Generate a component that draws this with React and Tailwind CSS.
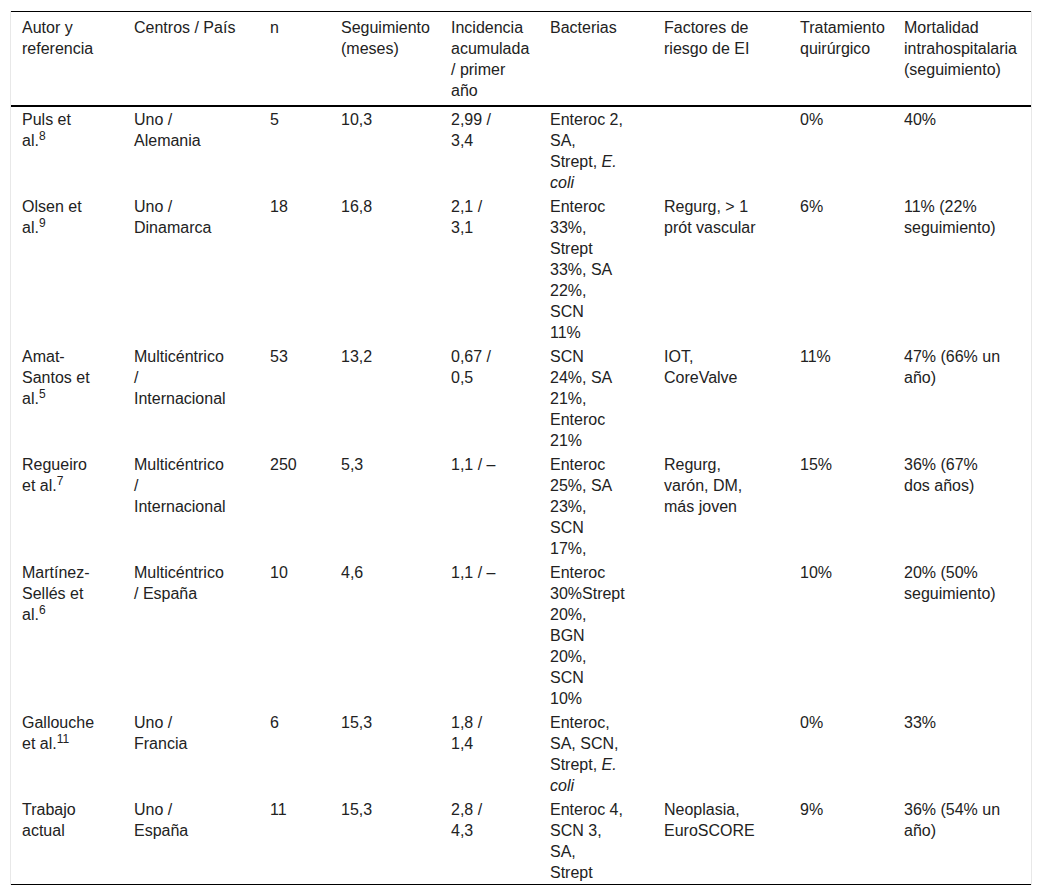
import React from "react";

const I = ({ children }) => <i>{children}</i>;

const header = [
  ["Autor y", "referencia"],
  ["Centros / País"],
  ["n"],
  ["Seguimiento", "(meses)"],
  ["Incidencia", "acumulada", "/ primer", "año"],
  ["Bacterias"],
  ["Factores de", "riesgo de EI"],
  ["Tratamiento", "quirúrgico"],
  ["Mortalidad", "intrahospitalaria", "(seguimiento)"],
];

const rows = [
  [
    ["Puls et", <>al.<sup>8</sup></>],
    ["Uno /", "Alemania"],
    ["5"],
    ["10,3"],
    ["2,99 /", "3,4"],
    ["Enteroc 2,", "SA,", <>Strept, <I>E.</I></>, <I>coli</I>],
    [],
    ["0%"],
    ["40%"],
  ],
  [
    ["Olsen et", <>al.<sup>9</sup></>],
    ["Uno /", "Dinamarca"],
    ["18"],
    ["16,8"],
    ["2,1 /", "3,1"],
    ["Enteroc", "33%,", "Strept", "33%, SA", "22%,", "SCN", "11%"],
    ["Regurg, > 1", "prót vascular"],
    ["6%"],
    ["11% (22%", "seguimiento)"],
  ],
  [
    ["Amat-", "Santos et", <>al.<sup>5</sup></>],
    ["Multicéntrico", "/", "Internacional"],
    ["53"],
    ["13,2"],
    ["0,67 /", "0,5"],
    ["SCN", "24%, SA", "21%,", "Enteroc", "21%"],
    ["IOT,", "CoreValve"],
    ["11%"],
    ["47% (66% un", "año)"],
  ],
  [
    ["Regueiro", <>et al.<sup>7</sup></>],
    ["Multicéntrico", "/", "Internacional"],
    ["250"],
    ["5,3"],
    ["1,1 / –"],
    ["Enteroc", "25%, SA", "23%,", "SCN", "17%,"],
    ["Regurg,", "varón, DM,", "más joven"],
    ["15%"],
    ["36% (67%", "dos años)"],
  ],
  [
    ["Martínez-", "Sellés et", <>al.<sup>6</sup></>],
    ["Multicéntrico", "/ España"],
    ["10"],
    ["4,6"],
    ["1,1 / –"],
    ["Enteroc", "30%Strept", "20%,", "BGN", "20%,", "SCN", "10%"],
    [],
    ["10%"],
    ["20% (50%", "seguimiento)"],
  ],
  [
    ["Gallouche", <>et al.<sup>11</sup></>],
    ["Uno /", "Francia"],
    ["6"],
    ["15,3"],
    ["1,8 /", "1,4"],
    ["Enteroc,", "SA, SCN,", <>Strept, <I>E.</I></>, <I>coli</I>],
    [],
    ["0%"],
    ["33%"],
  ],
  [
    ["Trabajo", "actual"],
    ["Uno /", "España"],
    ["11"],
    ["15,3"],
    ["2,8 /", "4,3"],
    ["Enteroc 4,", "SCN 3,", "SA,", "Strept"],
    ["Neoplasia,", "EuroSCORE"],
    ["9%"],
    ["36% (54% un", "año)"],
  ],
];

function Lines({ lines }) {
  return lines.map((l, i) => (
    <div key={i} className="whitespace-nowrap">
      {l}
    </div>
  ));
}

export default function App() {
  return (
    <div className="bg-white min-h-[895px] pt-[11px]">
      <div
        className="ml-[10px] w-[1022px] border-x border-[#e8e8e8] text-[16px] leading-[21px] text-[#222]"
        style={{ fontFamily: '"Liberation Sans", Arial, sans-serif' }}
      >
        <table className="w-[1020px] table-fixed border-collapse border-t border-b border-black">
          <colgroup>
            <col className="w-[112px]" />
            <col className="w-[136px]" />
            <col className="w-[71px]" />
            <col className="w-[110px]" />
            <col className="w-[99px]" />
            <col className="w-[114px]" />
            <col className="w-[136px]" />
            <col className="w-[104px]" />
            <col className="w-[138px]" />
          </colgroup>
          <thead>
            <tr className="border-b-2 border-black">
              {header.map((h, i) => (
                <th
                  key={i}
                  className="pl-[11px] pt-[5px] pb-[4px] text-left align-top font-normal"
                >
                  <Lines lines={h} />
                </th>
              ))}
            </tr>
          </thead>
          <tbody>
            {rows.map((r, ri) => (
              <tr key={ri}>
                {r.map((c, ci) => (
                  <td key={ci} className="pl-[11px] pt-[2px] pb-[1px] align-top">
                    <Lines lines={c} />
                  </td>
                ))}
              </tr>
            ))}
          </tbody>
        </table>
      </div>
    </div>
  );
}
